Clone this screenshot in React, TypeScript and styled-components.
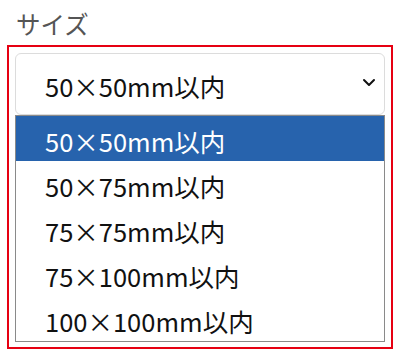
import styled, { createGlobalStyle } from "styled-components";

const sizes = [
  "50×50mm以内",
  "50×75mm以内",
  "75×75mm以内",
  "75×100mm以内",
  "100×100mm以内",
];

const GlobalStyle = createGlobalStyle`
  html, body {
    margin: 0;
    padding: 0;
    background: #ffffff;
  }

  body {
    font-family: "Noto Sans CJK JP", "Noto Sans", sans-serif;
  }
`;

const App: React.FC = () => {
  const selected = 0;

  return (
    <StyledPage>
      <GlobalStyle />
      <Label>サイズ</Label>
      <Highlight>
        <SelectBox>
          <span>{sizes[selected]}</span>
          <svg width="14" height="9" viewBox="0 0 14 9" fill="none">
            <path
              d="M2 2l5 5 5-5"
              stroke="#111"
              strokeWidth="2"
              strokeLinecap="round"
              strokeLinejoin="round"
            />
          </svg>
        </SelectBox>
        <OptionList>
          {sizes.map((size, i) => (
            <Option key={size} $active={i === selected}>
              {size}
            </Option>
          ))}
        </OptionList>
      </Highlight>
    </StyledPage>
  );
};

const StyledPage = styled.div`
  width: 400px;
  height: 360px;
  box-sizing: border-box;
  padding-top: 8px;
`;

const Label = styled.div`
  font-size: 24.5px;
  line-height: 32px;
  color: #555555;
  padding-left: 16px;
  margin-bottom: 5px;
`;

const Highlight = styled.div`
  margin: 0 7px;
  border: 2px solid #e60012;
  padding: 6px 6px 5px;
`;

const SelectBox = styled.div`
  display: flex;
  justify-content: space-between;
  align-items: center;

  height: 60px;
  padding: 0 8px 0 29px;

  border: 1px solid #dcdcdc;
  border-radius: 6px;

  font-size: 25.5px;
  color: #111111;

  span {
    padding-top: 3px;
  }

  svg {
    margin-top: -4px;
  }
`;

const OptionList = styled.div`
  border: 1px solid #8a8a8a;
  background: #ffffff;
`;

const Option = styled.div<{ $active: boolean }>`
  height: 45px;
  display: flex;
  align-items: center;
  padding-left: 29px;
  padding-top: 4px;
  box-sizing: border-box;

  font-size: 25.5px;
  color: ${(props) => (props.$active ? "#ffffff" : "#111111")};
  background-color: ${(props) => (props.$active ? "#2763ad" : "transparent")};
`;

export default App;
